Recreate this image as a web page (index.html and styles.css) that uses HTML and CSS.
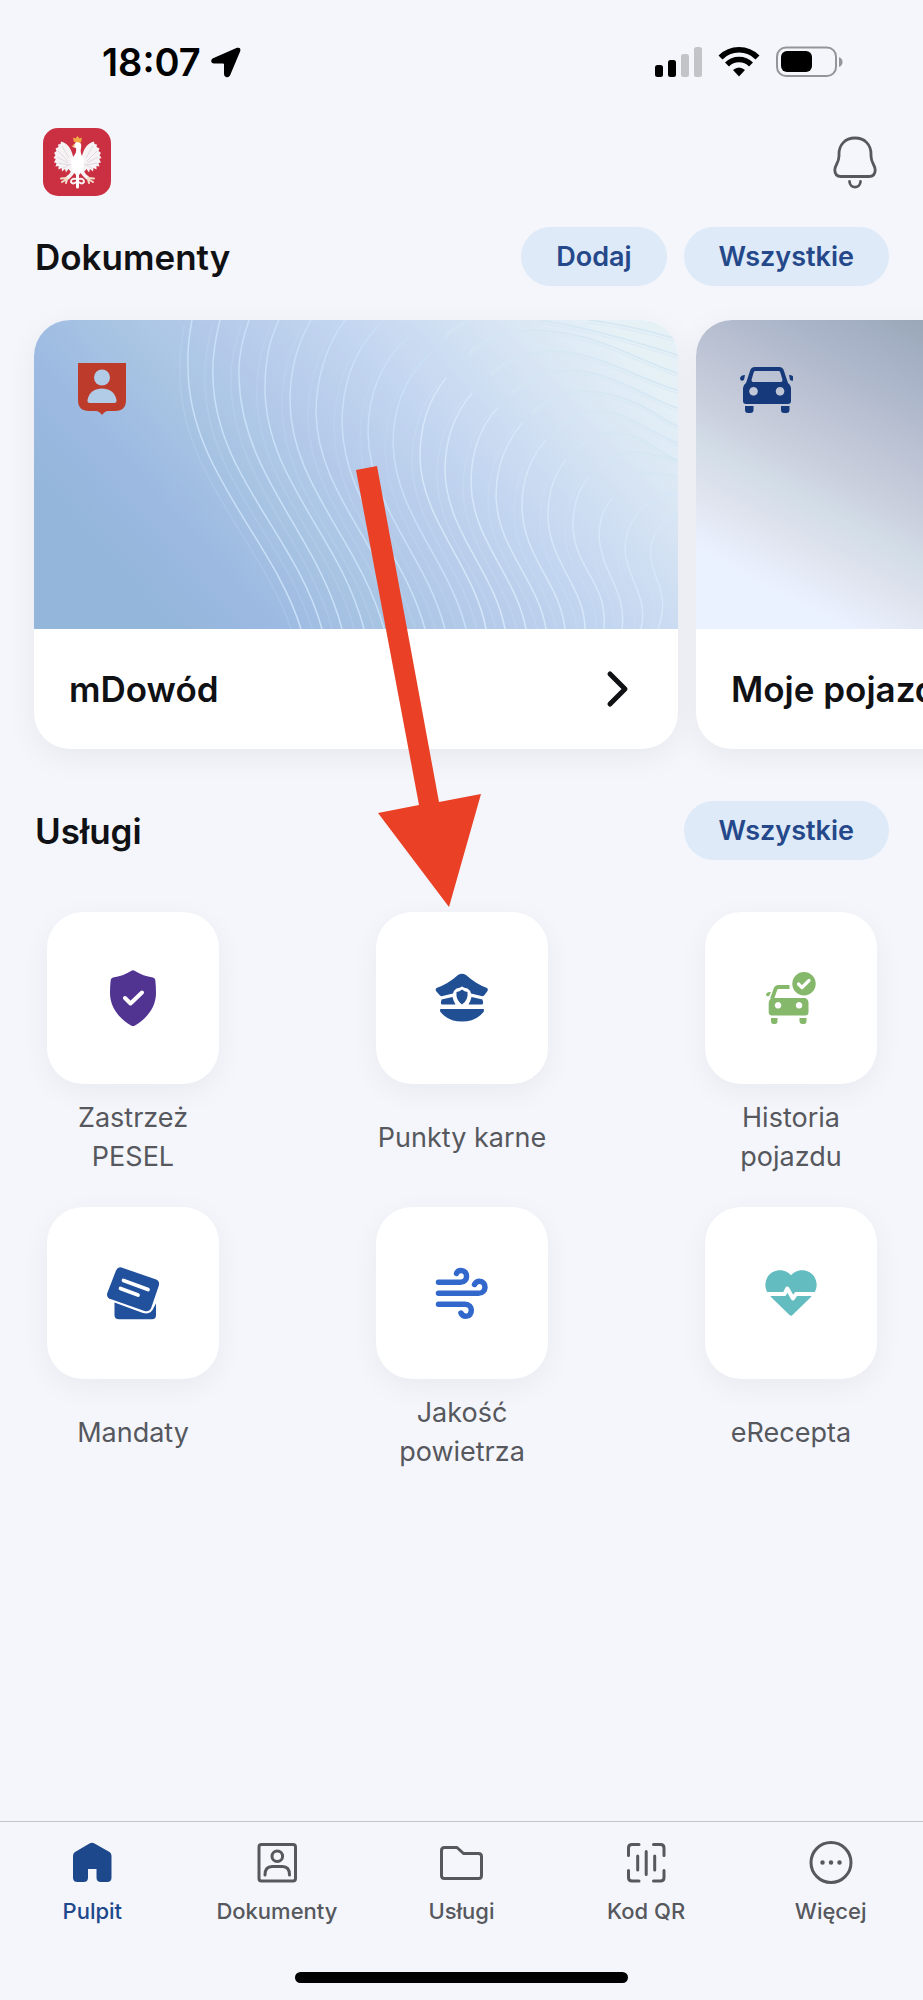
FILE: index.html
```html
<!DOCTYPE html>
<html lang="pl">
<head>
<meta charset="utf-8">
<meta name="viewport" content="width=device-width, initial-scale=1">
<title>mObywatel – Pulpit</title>
<link rel="stylesheet" href="styles.css">
</head>
<body>
<div class="statusbar">
  <div class="clock">
    <span>18:07</span>
    <svg width="30" height="31" viewBox="0 0 30 31" aria-hidden="true"><path d="M1.500 11.500 L26 .8 Q30 0 29.300 4 L19 28.500 Q17.500 31 15 30 Q13 29.500 13 27 V17.500 Q13 16.500 12 16.500 H3 Q.5 16.500 .2 14.500 Q0 12.500 1.500 11.500Z" fill="#000"/></svg>
  </div>
  <svg width="188" height="32" viewBox="0 0 188 32" aria-hidden="true">
    <rect x="0" y="19" width="8" height="12" rx="2.5"/>
    <rect x="13" y="14" width="8" height="17" rx="2.5"/>
    <rect x="26" y="8" width="8" height="23" rx="2.5" fill="#c3c4c8"/>
    <rect x="39" y="1" width="8" height="30" rx="2.5" fill="#c3c4c8"/>
    <g fill="none" stroke="#000" stroke-width="5.6">
      <path d="M65.500 11.500 A26 26 0 0 1 102.500 11.500"/>
      <path d="M72 18.500 A17 17 0 0 1 96 18.500"/>
    </g>
    <path d="M84 30.500 L78 24 Q84 19 90 24Z"/>
    <rect x="122" y="1.500" width="59" height="28.500" rx="9" fill="none" stroke="#94959a" stroke-width="2"/>
    <rect x="126" y="5" width="31" height="21" rx="6"/>
    <path d="M184 11 Q187.500 12.500 187.500 16 T184 21Z" fill="#94959a"/>
  </svg>
</div>

<main class="content">
  <header class="topbar">
    <svg class="logo" viewBox="0 0 68 68" role="img" aria-label="mObywatel">
      <rect width="68" height="68" rx="15" fill="#cb2f42"/>
      <g id="eagle-half">
        <path id="wing" d="M31 34 C30 24 26 15 18 13.500 L17.500 16 L15 16.500 L15.500 19 L12.500 20.500 L13.500 23 L11 25 L12.500 27 L10.500 30 L12.800 31 L11 34.500 L13.500 35 L12.500 38.500 L15.500 38 L15.500 41.500 L18.500 40 L19 43.500 L22 41 L23 44.500 L25.500 41 L28 44 L34 46 V33Z" fill="#f6f3f5"/>
        <g stroke="#d9d3da" stroke-width=".8" fill="none"><path d="M19 18 L26 30 M15 23 L25 33 M14 29 L25 35 M15 35 L26 37 M20 40 L28 36"/></g>
        <path d="M31 42 Q28 48 23 51" stroke="#f6f3f5" stroke-width="3.500" fill="none"/>
        <path d="M24 50 L18 50.500 M24 51 L19 54 M24 51 L23 55" stroke="#f3dcc8" stroke-width="2" stroke-linecap="round"/>
        <path d="M33 51 Q28 50 28 54 Q30 57 33 54" stroke="#f6f3f5" stroke-width="2" fill="none"/>
      </g>
      <use href="#eagle-half" transform="translate(69 0) scale(-1 1)"/>
      <path d="M33 14 C37 13 39 16 38 20 C37 24 38 27 41 31 L40 42 L36 47 H33 L29 42 L28 31 C31 28 34 25 33 20 L29.500 19Z" fill="#fff"/>
      <path d="M34.500 44 V59" stroke="#fff" stroke-width="3" stroke-linecap="round"/>
      <path d="M31 14 L30 9.500 L32.500 10.500 L34.500 8 L36.500 10.500 L39 9.500 L38 14.500Z M31 16 L28.500 18.500 L32 18.500Z" fill="#f2aa45"/>
    </svg>
    <button class="bell" type="button" aria-label="Powiadomienia">
      <svg width="44" height="53" viewBox="0 0 44 53" fill="none" stroke="#56585e" stroke-width="2.800" stroke-linecap="round"><path d="M22 2 C12 2 6 9 6 18 V20 C6 27 1.800 29 1.800 34 C1.800 38 4 40.500 8 40.500 H36 C40 40.500 42.200 38 42.200 34 C42.200 29 38 27 38 20 V18 C38 9 32 2 22 2Z"/><path d="M16.500 45.500 C17 53 27 53 27.500 45.500"/></svg>
    </button>
  </header>

  <section class="documents">
    <div class="section-head">
      <h2>Dokumenty</h2>
      <div class="actions">
        <button class="pill" type="button">Dodaj</button>
        <button class="pill" type="button">Wszystkie</button>
      </div>
    </div>
    <div class="carousel">
      <a class="card" href="#mdowod">
        <div class="cover cover-id">
          <svg class="waves" viewBox="0 0 644 309" preserveAspectRatio="xMaxYMid slice" aria-hidden="true">
            <g id="wave-lines" fill="none" stroke-linecap="round">
              <g stroke="#c9e0f8" stroke-width="1.500">
                <path d="M158 0 C155 16 153 30 154 47 C154 150 240 220 267 309"/>
                <path d="M186 0 C181 20 178 38 179 57 C181 155 262 215 288 309"/>
                <path d="M215 0 C208 20 204 38 205 57 C207 155 284 215 308 309"/>
                <path d="M245 0 C235 20 231 45 231 67 C231 160 306 215 330 309"/>
                <path d="M277 0 C263 24 256 50 256 80 C256 165 326 220 350 309"/>
                <path d="M311 0 C292 25 282 60 282 93 C284 175 350 225 371 309"/>
                <path d="M345 5 C320 30 308 65 308 103 C310 185 370 230 391 309"/>
                <path d="M375 17 C347 40 334 75 334 113 C336 190 392 235 411 309"/>
                <path d="M395 35 C370 58 359 90 359 123 C361 195 415 240 432 309"/>
              </g>
              <g stroke="#d6e7f9" stroke-width="1.500">
                <path d="M412 58 C394 80 386 108 386 137 C387 200 440 245 452 309"/>
                <path d="M438 73 C418 97 411 122 411 150 C412 212 460 250 471 309"/>
                <path d="M463 88 C444 110 437 136 437 163 C438 220 482 255 492 309"/>
                <path d="M488 103 C468 127 462 152 462 177 C464 230 504 260 512 309"/>
                <path d="M512 120 C494 140 488 162 488 187 C489 238 526 262 531 309"/>
                <path d="M532 140 C519 155 514 174 514 197 C515 242 551 268 551 309"/>
                <path d="M555 157 C543 170 539 190 539 207 C541 250 574 262 570 309"/>
                <path d="M578 178 C568 190 565 204 565 217 C568 255 593 270 588 309"/>
                <path d="M643 173 C606 178 591 205 591 230 C593 260 615 276 607 309"/>
                <path d="M643 195 C622 204 615 222 617 237 C619 262 637 272 624 309"/>
              </g>
            </g>
            <g id="wave-crests" fill="none" stroke="#d5e7f3" stroke-width="1.600" stroke-linecap="round">
              <path d="M555 0 Q595 5 643 19"/>
              <path d="M412 15 Q422 6 435 0 M505 0 Q560 8 643 35"/>
              <path d="M435 33 C462 5 510 8 545 16 S605 40 643 53"/>
              <path d="M457 53 C492 25 530 28 565 40 S615 62 643 70"/>
              <path d="M478 72 C512 42 550 48 580 60 S620 80 643 88"/>
              <path d="M498 92 C530 64 565 69 594 80 S625 98 643 106"/>
              <path d="M522 108 C552 84 580 90 600 101 S625 115 643 123"/>
              <path d="M542 128 C572 104 595 112 612 122 S632 136 643 140"/>
              <path d="M567 145 C590 126 610 131 643 141"/>
              <path d="M590 163 C608 148 622 152 643 157"/>
            </g>
            <use href="#wave-lines" transform="translate(-8 6)" opacity=".22"/>
            <use href="#wave-crests" transform="translate(0 3)" opacity=".5"/>
          </svg>
          <svg class="cover-icon" width="48" height="52" viewBox="0 0 48 52" aria-hidden="true">
            <path d="M0 0 H48 V37 Q48 48 37 48 H30 Q27 48 24 52 Q21 48 18 48 H11 Q0 48 0 37Z" fill="#bd3b2a"/>
            <circle cx="24" cy="14.500" r="8" fill="#b2cbe6"/>
            <path d="M12 40 Q9 40 9.500 37 C11 29 17 25.500 24 25.500 S37 29 38.500 37 Q39 40 36 40Z" fill="#b2cbe6"/>
          </svg>
        </div>
        <div class="card-title">
          <span>mDowód</span>
          <svg width="24" height="38" viewBox="0 0 24 38" fill="none" stroke="#101114" stroke-width="5" stroke-linecap="round" stroke-linejoin="round" aria-hidden="true"><path d="M4 4 L19 19 L4 34"/></svg>
        </div>
      </a>
      <a class="card" href="#pojazdy">
        <div class="cover cover-vehicle">
          <svg class="cover-icon" width="56" height="52" viewBox="-3 -4 56 52" aria-hidden="true" fill="#15397a">
            <path fill-rule="evenodd" d="M10 4 Q11 0 15 0 H39 Q43 0 44 4 L48 16 Q51 18 51 21 V34 Q51 37 48 37 H6 Q3 37 3 34 V21 Q3 18 6 16Z M15 4 Q14 4 13.500 6 L11.500 13 Q11.500 15 13 15 H41 Q42.500 15 42.500 13 L40.500 6 Q40 4 39 4Z M13.500 20 A4.300 4.300 0 1 0 13.600 20Z M40 20 A4.300 4.300 0 1 0 40.100 20Z"/>
            <path d="M5 39 H13.500 V43 Q13.500 46 10.500 46 H8 Q5 46 5 43Z M41 39 H49.500 V43 Q49.500 46 46.500 46 H44 Q41 46 41 43Z M5 8 L4 13 Q0 15 0 11 Q1 8 5 8Z M49 8 L50 13 Q54 15 54 11 Q53 8 49 8Z"/>
          </svg>
        </div>
        <div class="card-title"><span>Moje pojazdy</span></div>
      </a>
    </div>
  </section>

  <section class="services">
    <div class="section-head">
      <h2>Usługi</h2>
      <button class="pill" type="button">Wszystkie</button>
    </div>
    <div class="service-grid">
      <a class="service" href="#pesel">
        <span class="tile"><svg viewBox="0 0 64 64" aria-hidden="true"><path d="M30 5 Q32 3.500 34 5 Q42 10 52 11.500 Q54 12 54.300 14 Q55 20 55 27 C55 42 45 53 34 59.500 Q32 60.500 30 59.500 C19 53 9 42 9 27 Q9 20 9.700 14 Q10 12 12 11.500 Q22 10 30 5Z" fill="#513391"/><path d="M24 32 L29.500 37.500 L41 26.500" fill="none" stroke="#fff" stroke-width="4" stroke-linecap="round" stroke-linejoin="round"/></svg></span>
        <span class="label">Zastrzeż PESEL</span>
      </a>
      <a class="service" href="#punkty">
        <span class="tile"><svg viewBox="0 0 64 64" aria-hidden="true" fill="#204f94"><path d="M6.500 22 Q18 18 28 9 Q32 6.500 36 9 Q46 18 57 22 Q58.500 23 57.500 25 L54.500 29 Q53.500 30.500 51.500 30 L41 27.500 Q40 24 37.500 22.500 Q34 22 32 20.500 Q30 22 26.500 22.500 Q24 24 23 27.500 L12.500 30 Q10.500 30.500 9.500 29 L6 25 Q5 23 6.500 22Z"/><path d="M32 23.500 Q34.500 25.500 37.500 26 Q38.500 34 32 38.500 Q25.500 34 26.500 26 Q29.500 25.500 32 23.500Z"/><path d="M11.500 33.500 L22.500 31 Q23.500 35.500 25.500 38.500 H12.500 Q10.500 38.500 11 36Z M52.500 33.500 L41.500 31 Q40.500 35.500 38.500 38.500 H51.500 Q53.500 38.500 53 36Z M10.500 43 H53.500 Q54.500 44 53.500 46 Q46 55.500 32 55.500 Q18 55.500 10.500 46 Q9.500 44 10.500 43Z"/></svg></span>
        <span class="label">Punkty karne</span>
      </a>
      <a class="service" href="#historia">
        <span class="tile"><svg viewBox="0 0 64 64" aria-hidden="true" fill="#86b86b"><circle cx="45" cy="17.700" r="11.700"/><path d="M39.500 18 L43 21.500 L50 14.500" fill="none" stroke="#fff" stroke-width="3.200" stroke-linecap="round" stroke-linejoin="round"/><path d="M13 33 L16.500 23 Q17.500 21 19.500 21 H30.500" fill="none" stroke="#86b86b" stroke-width="3.800"/><path fill-rule="evenodd" d="M13 32 H46 Q49.500 33 49.500 37 V46 Q49.500 49.500 46 49.500 H13 Q9.700 49.500 9.700 46 V37 Q10 33 13 32Z M19 36 A3.300 3.300 0 1 0 19.100 36Z M40 36 A3.300 3.300 0 1 0 40.100 36Z"/><path d="M12 52 H18.500 V55 Q18.500 58 16 58 H14.500 Q12 58 12 55Z M40.500 52 H47.500 V55 Q47.500 58 45 58 H43.500 Q40.500 58 40.500 55Z M12 26 L10 30 Q7 31 7 28.500 Q7.500 25.500 12 26Z"/></svg></span>
        <span class="label">Historia pojazdu</span>
      </a>
      <a class="service" href="#mandaty">
        <span class="tile"><svg viewBox="0 0 64 64" aria-hidden="true" fill="#21509d"><path d="M20.500 6.500 L54.500 18.300 Q59.300 20 57.700 25 L50.500 46 Q48.500 51.500 43.500 50 L9.500 38 Q5 36 6.300 32 L15 9.500 Q17 5.500 20.500 6.500Z"/><path d="M22.500 19.500 L47 28.500 M19.500 27.500 L37 34" stroke="#fff" stroke-width="3.700" stroke-linecap="round"/><path d="M13.500 41.500 L42 52 Q50 54 52.500 47 L55 42.500 V54 Q55 58.300 51 58.300 H18 Q13.500 58.300 13.500 54Z"/></svg></span>
        <span class="label">Mandaty</span>
      </a>
      <a class="service" href="#powietrze">
        <span class="tile"><svg viewBox="0 0 64 64" aria-hidden="true" fill="none" stroke="#3268cb" stroke-width="5.500" stroke-linecap="round"><path d="M8.500 21.300 H30.500 C38.500 21.300 38.500 9.500 31 9.500 Q27.500 9.500 26.500 12.500"/><path d="M8.500 32.300 H48.500 C57 32.300 57 20.300 49.500 20.300 Q46 20.300 44.500 23.500"/><path d="M8.500 43.300 H35 C43.500 43.300 43 55.300 36 55.300 Q32.500 55.300 31 52"/></svg></span>
        <span class="label">Jakość powietrza</span>
      </a>
      <a class="service" href="#erecepta">
        <span class="tile"><svg viewBox="0 0 64 64" aria-hidden="true"><path d="M32 14.300 C39 6 52 8.500 56 17 C60 26 56 32 51 37 L33.500 54 Q32 55.500 30.500 54 L13 37 C8 32 4 26 8 17 C12 8.500 25 6 32 14.300Z" fill="#63bcbf"/><path d="M4 33 H25.500 L28.300 27.500 L34 37.500 L37 33 H60" fill="none" stroke="#fff" stroke-width="4" stroke-linejoin="round"/></svg></span>
        <span class="label">eRecepta</span>
      </a>
    </div>
  </section>

  <svg class="pointer" width="125" height="443" viewBox="0 0 125 443" aria-hidden="true"><path d="M0 5 L21 1 L83 337 L125 329 L93 442 L22 348 L63 340Z" fill="#ea4025"/></svg>
</main>

<footer class="dock">
  <nav class="tabs">
    <a class="tab active" href="#pulpit"><svg viewBox="0 0 48 48" aria-hidden="true"><path d="M21.500 4.500 Q24 3 26.500 4.500 L41.500 13 Q43.500 14.200 43.500 17 V38.500 Q43.500 43 39 43 H33 Q28.500 43 28.500 38.500 V30 H20 V38.500 Q20 43 15.500 43 H9.500 Q5 43 5 38.500 V17 Q5 14.200 7 13Z" fill="#1e488c"/></svg>Pulpit</a>
    <a class="tab" href="#dokumenty"><svg class="line" viewBox="0 0 48 48" aria-hidden="true"><rect x="6" y="5.500" width="36.500" height="36.500" rx="2.500"/><circle cx="24.300" cy="17.300" r="5.300"/><path d="M12 36 C12 30 15 27.500 19 27.500 H29.500 C33.500 27.500 36.500 30 36.500 36"/></svg>Dokumenty</a>
    <a class="tab" href="#uslugi"><svg class="line" viewBox="0 0 48 48" aria-hidden="true"><path d="M7.500 8.500 H20 L26.500 14.500 H41.500 Q44.500 14.500 44.500 17.500 V36.500 Q44.500 39.500 41.500 39.500 H7.500 Q4.500 39.500 4.500 36.500 V11.500 Q4.500 8.500 7.500 8.500Z"/></svg>Usługi</a>
    <a class="tab" href="#kod-qr"><svg class="line" viewBox="0 0 48 48" aria-hidden="true"><path d="M6.500 16.500 V9 Q6.500 5.500 10 5.500 H17 M31.500 5.500 H38.500 Q42 5.500 42 9 V16.500 M42 31.500 V38.500 Q42 42 38.500 42 H31.500 M17 42 H10 Q6.500 42 6.500 38.500 V31.500 M15.700 17 V31 M24.200 12.500 V35.500 M32.700 17 V31"/></svg>Kod QR</a>
    <a class="tab" href="#wiecej"><svg class="line" viewBox="0 0 48 48" aria-hidden="true"><circle cx="24" cy="23.500" r="20"/><path d="M15.500 23.500 h.01 M24 23.500 h.01 M32.500 23.500 h.01" stroke-width="4.500"/></svg>Więcej</a>
  </nav>
  <div class="home-indicator"></div>
</footer>
</body>
</html>
```
FILE: styles.css
```css
* {
  box-sizing: border-box;
}

body {
  margin: 0;
  min-height: 100vh;
  display: flex;
  flex-direction: column;
  background: #f4f6fb;
  color: #101114;
  font-family: Inter, "Liberation Sans", sans-serif;
}

a {
  color: inherit;
  text-decoration: none;
}

button {
  border: 0;
  margin: 0;
  font: inherit;
  color: inherit;
  cursor: pointer;
}

svg {
  display: block;
  flex: none;
}

.statusbar {
  display: flex;
  justify-content: space-between;
  align-items: center;
  height: 124px;
  padding: 0 80px 0 102px;
}

.clock {
  display: flex;
  align-items: center;
  gap: 10px;
  font-size: 38px;
  font-weight: 600;
  color: #000;
}

.content {
  position: relative;
  flex: 1;
}

.topbar {
  display: flex;
  justify-content: space-between;
  align-items: center;
  padding: 4px 46px 0 43px;
}

.logo {
  width: 68px;
  height: 68px;
}

.bell {
  padding: 0;
  background: none;
}

.section-head {
  display: flex;
  justify-content: space-between;
  align-items: center;
  padding: 0 34px 0 35px;
}

.section-head h2 {
  margin: 0;
  font-size: 35px;
  font-weight: 600;
}

.documents {
  padding-top: 31px;
}

.actions {
  display: flex;
  gap: 17px;
}

.pill {
  height: 59px;
  padding: 0 35px;
  border-radius: 30px;
  background: #deeaf7;
  color: #24488a;
  font-size: 27px;
  font-weight: 600;
}

.carousel {
  display: flex;
  gap: 18px;
  padding: 34px 34px;
  overflow: hidden;
}

.card {
  flex: 0 0 calc(100% - 211px);
  border-radius: 36px;
  background: #fff;
  box-shadow: 0 8px 32px rgba(20, 20, 30, 0.06);
}

.cover {
  position: relative;
  height: 309px;
  padding: 43px 44px;
  border-radius: 36px 36px 0 0;
  overflow: hidden;
}

.cover-id {
  background: linear-gradient(48deg, #94b6da 0%, #94b6da 14%, #9cb9e2 26%, #a8c4e3 38%, #b6cbea 50%, #c2d5f0 62%, #d5e3f3 78%, #e6f1f7 92%);
}

.cover-vehicle {
  padding-left: 41px;
  background: linear-gradient(28deg, #ebf2ff 70px, #dfe3ee 125px, #d2dde7 165px, #cbd0de 200px, #b6bed0 275px, #a7b2c7 330px, #98a6b6 385px);
}

.waves {
  position: absolute;
  inset: 0;
  width: 100%;
  height: 100%;
}

.cover-icon {
  position: relative;
}

.card-title {
  display: flex;
  justify-content: space-between;
  align-items: center;
  height: 120px;
  padding: 0 48px 0 35px;
  font-size: 35px;
  font-weight: 600;
}

.services {
  padding-top: 18px;
}

.service-grid {
  display: grid;
  grid-template-columns: repeat(3, 196px);
  justify-content: space-between;
  row-gap: 31px;
  padding: 52px 34px 0 35px;
}

.service {
  display: flex;
  flex-direction: column;
  align-items: center;
  gap: 14px;
  color: #56585e;
}

.tile {
  display: flex;
  align-items: center;
  justify-content: center;
  width: 172px;
  height: 172px;
  border-radius: 36px;
  background: #fff;
  box-shadow: 0 8px 30px rgba(20, 20, 30, 0.05);
}

.tile svg {
  width: 64px;
  height: 64px;
}

.label {
  display: flex;
  align-items: center;
  justify-content: center;
  width: 180px;
  min-height: 78px;
  font-size: 27px;
  line-height: 39px;
  text-align: center;
}

.pointer {
  position: absolute;
  left: 356px;
  top: 341px;
  pointer-events: none;
}

.dock {
  border-top: 1px solid #c3c5cb;
  padding-bottom: 17px;
}

.tabs {
  display: grid;
  grid-template-columns: repeat(5, 1fr);
  padding-top: 17px;
}

.tab {
  display: flex;
  flex-direction: column;
  align-items: center;
  gap: 11px;
  color: #56585e;
  font-size: 22px;
  font-weight: 500;
  line-height: 26px;
}

.tab.active {
  color: #1e488c;
}

.tab svg {
  width: 48px;
  height: 48px;
}

.line {
  fill: none;
  stroke: #56585e;
  stroke-width: 3;
  stroke-linecap: round;
  stroke-linejoin: round;
}

.home-indicator {
  width: 36%;
  height: 11px;
  margin: 48px auto 0;
  border-radius: 6px;
  background: #000;
}
```
